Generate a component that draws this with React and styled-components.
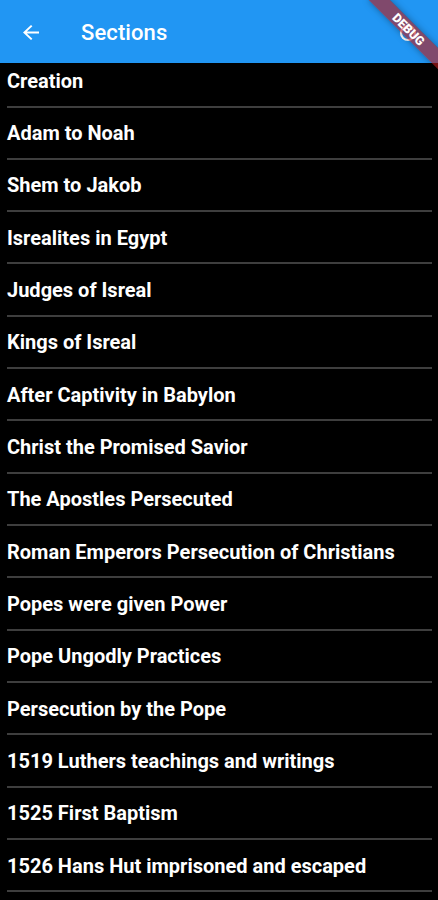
import React from "react";
import styled, { createGlobalStyle } from "styled-components";

const Global = createGlobalStyle`
  html, body { margin: 0; padding: 0; background: #000; }
  body { font-family: Roboto, "Noto Sans", "Liberation Sans", sans-serif; }
`;

const Screen = styled.div`
  position: relative;
  width: 438px;
  height: 900px;
  overflow: hidden;
  background: #000;
  display: flex;
  flex-direction: column;
`;

const AppBar = styled.header`
  flex: 0 0 63px;
  height: 63px;
  background: #2196f3;
  display: flex;
  align-items: center;
  color: #fff;
  position: relative;
  z-index: 1;
`;

const BackButton = styled.button`
  width: 61px;
  height: 63px;
  padding: 1px 0 0 23px;
  border: 0;
  background: transparent;
  color: #fff;
  display: flex;
  align-items: center;
  justify-content: flex-start;
`;

const Title = styled.h1`
  margin: 0 0 0 20px;
  padding-top: 2px;
  font-family: Roboto, "Liberation Sans", sans-serif;
  font-weight: 500;
  font-size: 22px;
  letter-spacing: 0.1px;
  flex: 1;
`;

const Action = styled.div`
  width: 48px;
  height: 63px;
  display: flex;
  align-items: center;
  justify-content: center;
  margin-right: 6px;
  padding-top: 2px;
  box-sizing: border-box;
`;

const ListViewport = styled.div`
  flex: 1;
  overflow: hidden;
`;

const ListInner = styled.ul`
  list-style: none;
  margin: -7.83px 0 0 0;
  padding: 0;
`;

const Item = styled.li`
  display: flex;
  flex-direction: column;
`;

const ItemText = styled.div`
  height: 50.33px;
  display: flex;
  align-items: center;
  padding: 1px 0 0 7px;
  box-sizing: border-box;
  font-family: Roboto, "Liberation Sans", sans-serif;
  font-weight: 700;
  font-size: 20px;
  color: #fff;
  white-space: nowrap;
`;

const Divider = styled.div`
  height: 2px;
  margin: 0 6px 0 7px;
  background: #3e3e3e;
`;

const Banner = styled.div`
  position: absolute;
  top: 34px;
  left: calc(100% - 49px);
  width: 98px;
  height: 15px;
  transform-origin: 49px -34px;
  transform: rotate(45deg);
  background: rgba(183, 28, 28, 0.63);
  box-shadow: 0 0 7px rgba(0, 0, 0, 0.35);
  color: #fff;
  font-family: Roboto, "Liberation Sans", sans-serif;
  font-weight: 900;
  font-size: 12.4px;
  line-height: 15px;
  text-align: center;
  z-index: 2;
  pointer-events: none;
`;

const sections = [
  "Creation",
  "Adam to Noah",
  "Shem to Jakob",
  "Isrealites in Egypt",
  "Judges of Isreal",
  "Kings of Isreal",
  "After Captivity in Babylon",
  "Christ the Promised Savior",
  "The Apostles Persecuted",
  "Roman Emperors Persecution of Christians",
  "Popes were given Power",
  "Pope Ungodly Practices",
  "Persecution by the Pope",
  "1519 Luthers teachings and writings",
  "1525 First Baptism",
  "1526 Hans Hut imprisoned and escaped",
];

export default function App() {
  return (
    <Screen>
      <Global />
      <AppBar>
        <BackButton aria-label="Back">
          <svg width="16" height="15" viewBox="4 4 16 16" preserveAspectRatio="none">
            <path
              fill="#fff"
              d="M20 11H7.83l5.59-5.59L12 4l-8 8 8 8 1.41-1.41L7.83 13H20v-2z"
            />
          </svg>
        </BackButton>
        <Title>Sections</Title>
        <Action>
          <svg width="18" height="18" viewBox="0 0 18 18">
            <circle cx="9" cy="9" r="7" fill="none" stroke="#fff" strokeWidth="2.2" />
          </svg>
        </Action>
      </AppBar>
      <ListViewport>
        <ListInner>
          {sections.map((s) => (
            <Item key={s}>
              <ItemText>{s}</ItemText>
              <Divider />
            </Item>
          ))}
        </ListInner>
      </ListViewport>
      <Banner>DEBUG</Banner>
    </Screen>
  );
}
